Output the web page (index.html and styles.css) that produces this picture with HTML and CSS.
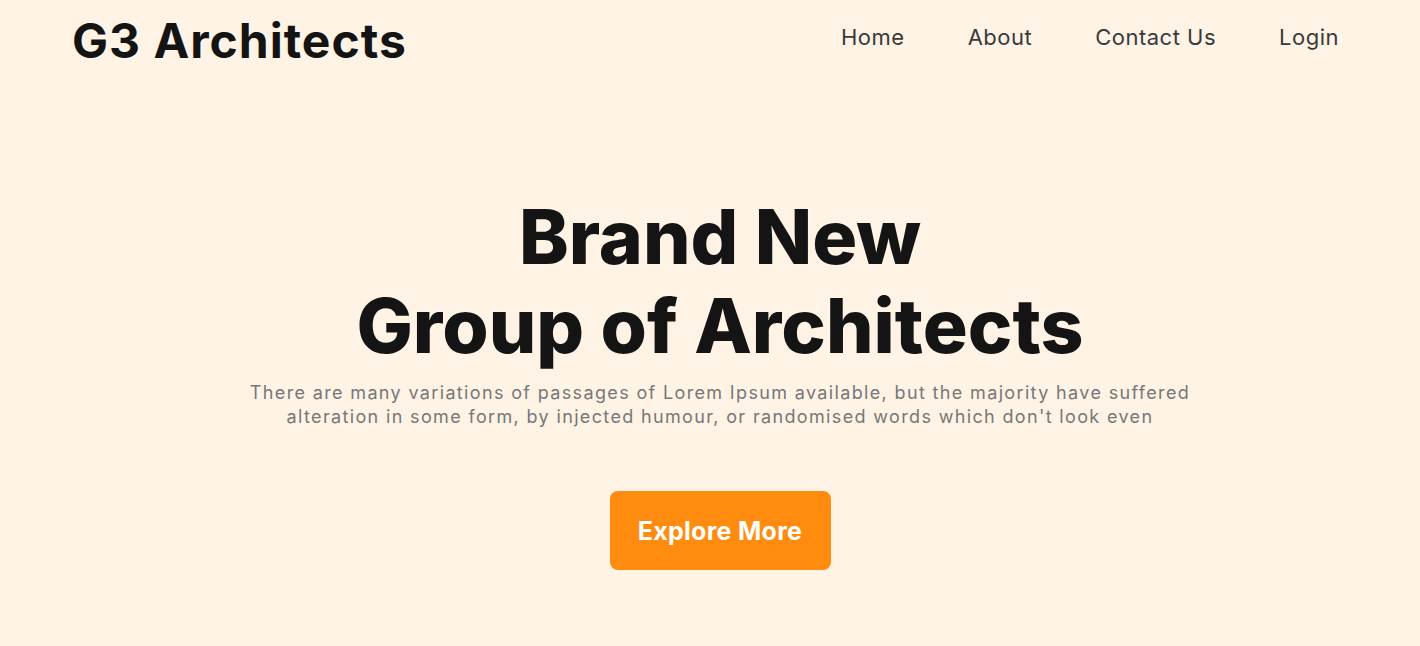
FILE: index.html
```html
<!DOCTYPE html>
<html lang="en">
<head>
<meta charset="utf-8">
<title>G3 Architects</title>
<link rel="stylesheet" href="styles.css">
</head>
<body>
<header class="header">
  <div class="logo">G3 Architects</div>
  <nav class="nav">
    <a class="nav-link" href="#">Home</a>
    <a class="nav-link" href="#">About</a>
    <a class="nav-link" href="#">Contact Us</a>
    <a class="nav-link" href="#">Login</a>
  </nav>
</header>
<main class="hero">
  <h1 class="hero-title">Brand New<br>Group of Architects</h1>
  <p class="hero-text">There are many variations of passages of Lorem Ipsum available, but the majority have suffered alteration in some form, by injected humour, or randomised words which don't look even</p>
  <a class="btn" href="#">Explore More</a>
</main>
</body>
</html>
```
FILE: styles.css
```css
* { box-sizing: border-box; }
html, body { margin: 0; padding: 0; }
body {
  background: #fff3e5;
  font-family: Inter, "Open Sans", sans-serif;
  color: #141414;
  height: 645px;
}
.header {
  display: flex;
  justify-content: space-between;
  align-items: center;
  padding: 6px 81px 0 72px;
  height: 76px;
}
.logo {
  font-size: 48px;
  font-weight: 700;
  letter-spacing: 1px;
  line-height: 56px;
}
.nav {
  display: flex;
  gap: 63px;
  margin-top: -8px;
}
.nav-link {
  font-size: 22px;
  letter-spacing: 0.5px;
  color: #3a3a3a;
  text-decoration: none;
}
.hero {
  display: flex;
  flex-direction: column;
  align-items: center;
  text-align: center;
  padding: 116px 0 0 20px;
}
.hero-title {
  margin: 0;
  font-size: 75px;
  font-weight: 800;
  line-height: 89px;
}
.hero-text {
  margin: 11px 0 0;
  width: 950px;
  font-size: 18px;
  letter-spacing: 1.35px;
  line-height: 24px;
  color: #777;
}
.btn {
  margin-top: 62px;
  width: 221px;
  height: 79px;
  display: flex;
  align-items: center;
  justify-content: center;
  background: #ff8c0e;
  color: #fff;
  border-radius: 8px;
  font-size: 25px;
  font-weight: 700;
  letter-spacing: 0.3px;
  text-decoration: none;
}
```
